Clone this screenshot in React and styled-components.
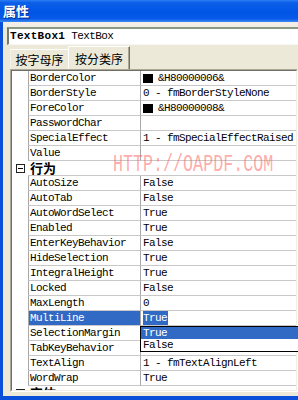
import React from "react";
import styled, { createGlobalStyle } from "styled-components";

const GlobalStyle = createGlobalStyle`
  * { box-sizing: border-box; }
  body {
    margin: 0;
    overflow: hidden;
    background: #fff;
  }
`;

const mono = `"Liberation Mono", "DejaVu Sans Mono", monospace`;
const cjk = `"Noto Sans CJK SC", "Noto Sans", sans-serif`;

const Window = styled.div`
  position: relative;
  width: 298px;
  height: 400px;
  overflow: hidden;
  display: flex;
  flex-direction: column;
`;

const TitleBar = styled.div`
  height: 22px;
  flex: none;
  padding-left: 3px;
  background: linear-gradient(
    #2d7ef2 0%,
    #0b5fe8 12%,
    #0055e5 55%,
    #0759e8 85%,
    #3b88f4 100%
  );
  color: #fff;
  font: bold 13px/22px ${cjk};
  text-shadow: 1px 1px 0 #0b2f8a;
`;

const Frame = styled.div`
  flex: 1;
  display: flex;
  border-left: 3px solid #0a4fda;
  border-bottom: 4px solid #0a4fda;
`;

const Panel = styled.div`
  flex: 1;
  display: flex;
  flex-direction: column;
  padding: 5px 0 4px 4px;
  background: linear-gradient(#f4eee8 0, #f1ece4 5px, #ece9d8 5px);
`;

const ObjectCombo = styled.div`
  height: 18px;
  flex: none;
  background: #fff;
  border-top: 2px solid #8a9886;
  border-left: 2px solid #6f7c6c;
  border-bottom: 1px solid #f6f6f2;
  padding-left: 1px;
  font: 11px/15px ${mono};
  letter-spacing: -0.6px;
  color: #000;
  white-space: nowrap;

  b {
    letter-spacing: 0.3px;
  }
`;

const TabStrip = styled.div`
  height: 24px;
  flex: none;
  display: flex;
  align-items: flex-end;
  margin-left: 3px;
`;

const Tab = styled.div`
  width: ${(p) => (p.$active ? 62 : 58)}px;
  height: ${(p) => (p.$active ? 23 : 20)}px;
  display: flex;
  align-items: center;
  justify-content: center;
  font: 12px/1 ${cjk};
  color: #000;
  border-top: 1px solid #fff;
  border-left: 1px solid ${(p) => (p.$active ? "#fff" : "#f4f2ea")};
  border-right: ${(p) => (p.$active ? "1px solid #716f64" : "none")};
  box-shadow: ${(p) => (p.$active ? "inset -1px 0 0 #aca899" : "none")};
  padding-top: ${(p) => (p.$active ? 1 : 0)}px;
`;

const GridFrame = styled.div`
  height: 323px;
  flex: none;
  margin-left: 3px;
  border: 1px solid;
  border-color: #aca899 #fff #fff #aca899;
  display: flex;
`;

const GridInner = styled.div`
  flex: 1;
  overflow: hidden;
  background: #fff;
  border: 1px solid;
  border-color: #716f64 #f1efe2 #f1efe2 #716f64;
`;

const Row = styled.div`
  display: flex;
  height: 15px;
  font: 11px/14px ${mono};
  letter-spacing: -0.6px;
  color: #000;
  white-space: nowrap;
`;

const Margin = styled.div`
  width: 16px;
  flex: none;
  display: flex;
  align-items: center;
  padding-left: 4px;
`;

const NameCell = styled.div`
  width: 112px;
  flex: none;
  padding-left: 1px;
  border-left: 1px solid #a8a8a8;
  border-bottom: 1px solid #c8c8c8;
  background: ${(p) => (p.$selected ? "#316ac5" : "transparent")};
  color: ${(p) => (p.$selected ? "#fff" : "#000")};
`;

const ValueCell = styled.div`
  flex: 1;
  display: flex;
  align-items: center;
  padding-left: 2px;
  border-left: 1px solid #a8a8a8;
  border-bottom: 1px solid #c8c8c8;
`;

const Swatch = styled.span`
  width: 10px;
  height: 9px;
  margin-right: 5px;
  background: ${(p) => p.$color};
`;

const SelectedText = styled.span`
  background: #316ac5;
  color: #fff;
  padding-right: 1px;
`;

const CategoryCell = styled.div`
  flex: 1;
  padding-left: 2px;
  border-bottom: 1px solid #c8c8c8;
  font: bold 13px/14px ${cjk};
  letter-spacing: 0;
`;

const Collapse = styled.span`
  position: relative;
  width: 9px;
  height: 9px;
  border: 1px solid #222;
  background: #fff;

  &::after {
    content: "";
    position: absolute;
    left: 1px;
    right: 1px;
    top: 3px;
    height: 1px;
    background: #000;
  }
`;

const Watermark = styled.div`
  position: absolute;
  left: 113px;
  top: 153px;
  font: 16.7px/17px ${mono};
  letter-spacing: 0;
  color: rgba(255, 100, 100, 0.55);
  transform: scaleY(1.4);
  transform-origin: top left;
  white-space: nowrap;
  pointer-events: none;
`;

const DropList = styled.div`
  position: absolute;
  left: 140px;
  top: 326px;
  width: 170px;
  background: #fff;
  border: 1px solid #000;
`;

const DropItem = styled.div`
  height: 12px;
  padding-left: 2px;
  font: 11px/12px ${mono};
  letter-spacing: -0.6px;
  background: ${(p) => (p.$active ? "#316ac5" : "#fff")};
  color: ${(p) => (p.$active ? "#fff" : "#000")};
`;

const rows = [
  { name: "BorderColor", value: "&H80000006&", color: "#000" },
  { name: "BorderStyle", value: "0 - fmBorderStyleNone" },
  { name: "ForeColor", value: "&H80000008&", color: "#000" },
  { name: "PasswordChar", value: "" },
  { name: "SpecialEffect", value: "1 - fmSpecialEffectRaised" },
  { name: "Value", value: "" },
  { category: "行为" },
  { name: "AutoSize", value: "False" },
  { name: "AutoTab", value: "False" },
  { name: "AutoWordSelect", value: "True" },
  { name: "Enabled", value: "True" },
  { name: "EnterKeyBehavior", value: "False" },
  { name: "HideSelection", value: "True" },
  { name: "IntegralHeight", value: "True" },
  { name: "Locked", value: "False" },
  { name: "MaxLength", value: "0" },
  { name: "MultiLine", value: "True", selected: true },
  { name: "SelectionMargin", value: "True" },
  { name: "TabKeyBehavior", value: "False" },
  { name: "TextAlign", value: "1 - fmTextAlignLeft" },
  { name: "WordWrap", value: "True" },
  { category: "字体" },
];

function PropertyRow({ row }) {
  if (row.category) {
    return (
      <Row>
        <Margin>
          <Collapse />
        </Margin>
        <CategoryCell>{row.category}</CategoryCell>
      </Row>
    );
  }
  return (
    <Row>
      <Margin />
      <NameCell $selected={row.selected}>{row.name}</NameCell>
      <ValueCell>
        {row.color && <Swatch $color={row.color} />}
        {row.selected ? <SelectedText>{row.value}</SelectedText> : row.value}
      </ValueCell>
    </Row>
  );
}

export default function App() {
  return (
    <>
      <GlobalStyle />
      <Window>
        <TitleBar>属性</TitleBar>
        <Frame>
          <Panel>
            <ObjectCombo>
              <b>TextBox1</b> TextBox
            </ObjectCombo>
            <TabStrip>
              <Tab>按字母序</Tab>
              <Tab $active>按分类序</Tab>
            </TabStrip>
            <GridFrame>
              <GridInner>
                {rows.map((row, i) => (
                  <PropertyRow key={i} row={row} />
                ))}
              </GridInner>
            </GridFrame>
          </Panel>
        </Frame>
        <Watermark>HTTP://OAPDF.COM</Watermark>
        <DropList>
          <DropItem $active>True</DropItem>
          <DropItem>False</DropItem>
        </DropList>
      </Window>
    </>
  );
}
